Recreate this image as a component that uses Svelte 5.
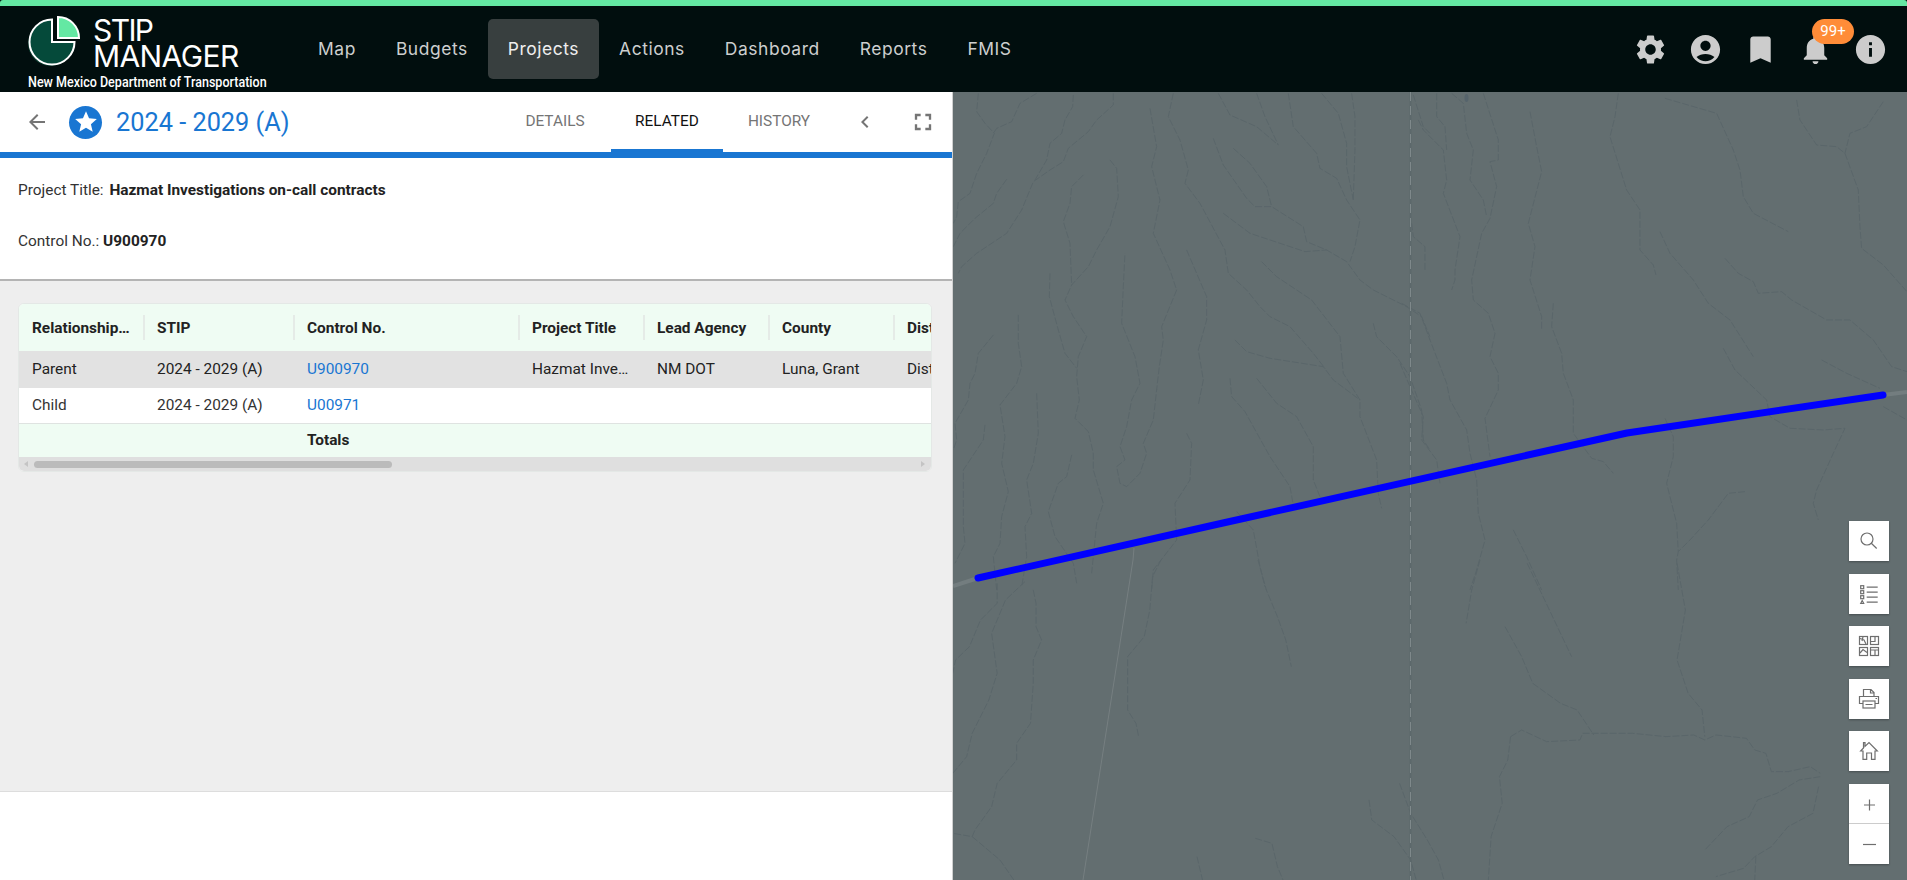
<script>
	const navItems = ['Map', 'Budgets', 'Projects', 'Actions', 'Dashboard', 'Reports', 'FMIS'];
	const tabs = ['Details', 'Related', 'History'];

	const columns = ['Relationship Type', 'STIP', 'Control No.', 'Project Title', 'Lead Agency', 'County', 'District'];
	const rows = [
		{ kind: 'selected', cells: ['Parent', '2024 - 2029 (A)', 'U900970', 'Hazmat Investigations on-call contracts', 'NM DOT', 'Luna, Grant', 'District 6'] },
		{ kind: '', cells: ['Child', '2024 - 2029 (A)', 'U00971', '', '', '', ''] }
	];

	// drainage lines, traced per area of the map (local units, scaled by the group transform)
	const streamsA = [
		'85,10 80,65 105,100 133,130 110,190 80,250 60,310 25,335 20,380 10,400',
		'370,15 368,50 345,90 335,130 300,160 290,210 255,270',
		'260,10 210,40 185,95 140,115 130,130',
		'490,10 490,45 440,90 415,125 355,175 340,215 300,240 250,275 215,360 170,430 140,450 80,490 35,530 25,550',
		'170,268 140,310 130,340 75,385 30,430 10,470',
		'400,255 365,290 360,340 340,395 360,460 365,585',
		'480,210 500,235 505,320 480,410 440,480 415,530 365,585 345,630 370,680 410,740 385,800 380,860 388,930 375,985 415,1025 430,1090 430,1140 460,1240 440,1300 425,1450',
		'300,550 298,620 325,720 345,790 380,835',
		'600,55 620,170 605,230 630,330 610,430 660,540 680,600 635,710 640,750 628,830 620,900 610,990 580,1060 590,1090 570,1150 530,1190 510,1180 500,1130 525,1110 510,1070 530,1010 545,930 570,880 555,800 515,700 520,590 525,490',
		'670,10 655,80 690,150 715,240 705,280 750,340 825,480 835,550 890,600 930,650 960,680 1020,710 1090,790 1125,835',
		'710,480 770,620 770,690 745,780 760,870 745,945',
		'790,145 820,225 890,325 915,350 965,350 1060,410 1070,455 1130,480 1190,515 1230,570 1270,600 1370,650 1415,680 1440,740',
		'850,175 900,220 950,290 965,350',
		'805,10 840,75 920,110 985,165',
		'920,10 945,80 985,165',
		'1015,10 1030,110 1100,190 1110,235 1160,265 1190,330 1230,390 1215,470 1200,515',
		'1115,10 1165,70 1190,160 1190,230 1210,330',
		'1205,10 1215,80 1215,180 1210,330',
		'820,370 900,430 1065,485 1130,480',
		'935,515 980,560 1085,630 1170,740 1180,850 1230,930 1230,980 1280,1110 1285,1210 1295,1255',
		'855,750 890,785 960,805 1120,830 1150,870 1210,915 1230,930',
		'920,865 980,940 1040,980 1090,1070 1090,1170 1110,1220',
		'840,865 845,920 885,965 960,1100 1020,1190 1030,1245',
		'205,675 205,760 215,830 200,880 150,945 165,1040 155,1120 175,1205 155,1280 150,1360 130,1400 140,1500',
		'130,735 85,790 75,850 60,880 55,930 15,1000 20,1050 10,1080',
		'260,910 265,1030 250,1120 230,1170 245,1270 225,1310 230,1400 215,1490',
		'105,1005 100,1050 40,1140 40,1310 45,1360 15,1420',
		'365,1095 350,1160 325,1180 295,1265 315,1340 370,1420 380,1480',
		'710,1030 725,1060 720,1170 675,1240 680,1350 610,1440 605,1500',
		'860,1265 910,1320 930,1430 945,1490',
		'1270,700 1280,740 1340,800 1380,860 1415,960 1420,1050 1440,1080',
		'1390,15 1420,110 1440,130',
		'1385,400 1390,440 1425,470 1425,545'
	];
	const streamsB = [
		'55,90 70,120 130,180 140,270 130,310 180,440 165,540 165,570 155,600',
		'110,10 110,80 135,110 140,180',
		'155,10 190,40 200,130 220,180 210,270 250,330 260,380',
		'250,10 295,150 295,210 270,215 290,290 270,385 245,430 215,570 220,630 265,670 285,730 270,800 295,850 295,900 255,985 270,1100',
		'390,65 410,170 425,245 385,400 405,470 390,570 425,680 425,720',
		'655,10 645,80 630,140 680,300 720,360 720,480 760,525 768,555',
		'795,25 950,70 1000,180 1020,240 1030,320 1060,370 1165,425',
		'1190,30 1200,90 1250,165 1310,170 1335,190 1375,300 1380,410 1385,475 1450,525 1521,605',
		'1450,35 1400,110 1350,130 1335,190',
		'5,640 60,670 90,750 140,880 150,930 200,1020 210,1090 230,1170 235,1270 255,1350 230,1440 210,1500',
		'460,640 455,710 485,790 490,850 520,930 520,1030 575,1105 610,1115 640,1150',
		'780,425 810,490 880,570 925,640 990,690 1060,800',
		'970,775 1005,840 1100,930 1110,980 1170,1015 1270,1020 1335,1015 1300,1090 1250,1200 1240,1240 1255,1290',
		'975,505 1015,550 1060,575 1075,610 1145,605 1175,630 1280,690 1350,690 1420,750 1475,830 1521,845',
		'1265,810 1340,850 1440,895',
		'795,985 820,1040 820,1100 800,1180 830,1300 835,1385 830,1410 835,1500',
		'1035,1205 985,1210 925,1290 870,1350 835,1385',
		'340,1320 380,1400 425,1500',
		'1450,950 1521,990',
		'0,820 30,890 70,980 65,1050 110,1110 120,1180'
	];
	const streamsC = [
		'85,70 85,130 55,180 35,260 10,300 5,340',
		'135,65 100,120 75,220 85,340 70,420 40,520 30,590 5,640',
		'150,90 155,130 155,200 165,240 150,300 150,370 145,490 120,550 120,600 85,670 75,740 45,810 40,830 5,820',
		'40,830 90,900 115,960',
		'380,0 365,50 360,150 350,230 320,290 320,370 320,450 335,490 340,530',
		'555,0 570,90 590,170 605,240 615,320',
		'955,0 940,90 930,190',
		'1040,10 1080,150 1120,290',
		'1000,200 1030,290 1050,370 1100,430 1130,450 1160,525',
		'1310,10 1325,150 1310,300 1330,400 1355,450 1360,530',
		'1010,530 1030,510 1075,545 1135,540 1140,520 1230,520 1290,530 1340,525 1360,540 1380,525 1435,535 1450,570 1470,580 1480,635 1510,635 1550,620 1568,640',
		'1010,530 1005,600 990,650 995,730 975,830 970,960',
		'1568,650 1530,660 1490,700 1455,720 1440,770 1400,800 1360,870',
		'1565,680 1555,760 1510,800 1480,860 1450,890 1430,925 1380,950',
		'810,670 830,760 860,840 880,900 890,960',
		'755,720 760,780 800,830 830,900 840,960',
		'550,835 580,850 590,920 600,960',
		'445,890 455,960',
		'1452,890 1450,960'
	];
</script>

<div class="app">
	<div class="band"></div>

	<header class="topbar">
		<div class="brand">
			<div class="brand-top">
				<svg class="logo" width="60" height="56" viewBox="24 13 60 56">
					<path d="M50.500 21 A22.500 22.500 0 1 0 73 43.500 L50.500 43.500 Z" fill="#0b3a2e" />
					<path d="M52 19.500 A22.500 22.500 0 1 0 74.500 42 L52 42 Z" fill="#054a3a" stroke="#fff" stroke-width="2" />
					<path d="M58 17 A21 21 0 0 1 79 38 L58 38 Z" fill="#64e8a3" stroke="#fff" stroke-width="2" />
				</svg>
				<div class="wordmark"><span class="stip">STIP</span><br />MANAGER</div>
			</div>
			<div class="dept">New Mexico Department of Transportation</div>
		</div>

		<nav class="nav">
			{#each navItems as item}
				<a href="#top" class="nav-link" class:active={item === 'Projects'}>{item}</a>
			{/each}
		</nav>

		<div class="top-icons">
			<svg viewBox="0 0 24 24"><path d="M19.14 12.94c.04-.3.06-.61.06-.94 0-.32-.02-.64-.07-.94l2.03-1.58c.18-.14.23-.41.12-.61l-1.92-3.32c-.12-.22-.37-.29-.59-.22l-2.39.96c-.5-.38-1.03-.7-1.62-.94l-.36-2.54c-.04-.24-.24-.41-.48-.41h-3.84c-.24 0-.43.17-.47.41l-.36 2.54c-.59.24-1.13.57-1.62.94l-2.39-.96c-.22-.08-.47 0-.59.22L2.74 8.87c-.12.21-.08.47.12.61l2.03 1.58c-.05.3-.09.63-.09.94s.02.64.07.94l-2.03 1.58c-.18.14-.23.41-.12.61l1.92 3.32c.12.22.37.29.59.22l2.39-.96c.5.38 1.03.7 1.62.94l.36 2.54c.05.24.24.41.48.41h3.84c.24 0 .44-.17.47-.41l.36-2.54c.59-.24 1.13-.56 1.62-.94l2.39.96c.22.08.47 0 .59-.22l1.92-3.32c.12-.22.07-.47-.12-.61l-2.01-1.58zM12 15.600c-1.98 0-3.6-1.62-3.6-3.6s1.62-3.6 3.6-3.6 3.6 1.62 3.6 3.6-1.62 3.6-3.6 3.6z" /></svg>
			<svg viewBox="0 0 24 24"><path d="M12 2C6.48 2 2 6.48 2 12s4.48 10 10 10 10-4.48 10-10S17.52 2 12 2zm0 4c1.93 0 3.5 1.57 3.5 3.5S13.93 13 12 13s-3.5-1.57-3.5-3.5S10.07 6 12 6zm0 14c-2.03 0-4.43-.82-6.14-2.88C7.55 15.8 9.68 15 12 15s4.45.8 6.14 2.12C16.43 19.18 14.03 20 12 20z" /></svg>
			<svg viewBox="0 0 24 24"><path d="M17 3H7c-1.100 0-1.990.9-1.990 2L5 21l7-3 7 3V5c0-1.100-.9-2-2-2z" /></svg>
			<div class="bell">
				<svg viewBox="0 0 24 24"><path d="M12 22c1.100 0 2-.9 2-2h-4c0 1.100.9 2 2 2zm6-6v-5c0-3.070-1.630-5.640-4.500-6.320V4c0-.83-.67-1.500-1.500-1.500s-1.500.67-1.500 1.500v.68C7.640 5.360 6 7.920 6 11v5l-2 2v1h16v-1l-2-2z" /></svg>
				<span class="badge">99+</span>
			</div>
			<svg viewBox="0 0 24 24"><path d="M12 2C6.480 2 2 6.480 2 12s4.480 10 10 10 10-4.480 10-10S17.520 2 12 2zm1 15h-2v-6h2v6zm0-8h-2V7h2v2z" /></svg>
		</div>
	</header>

	<main class="content">
		<section class="panel">
			<div class="toolbar">
				<svg class="back" viewBox="0 0 24 24"><path d="M20 11H7.830l5.590-5.590L12 4l-8 8 8 8 1.410-1.410L7.830 13H20v-2z" /></svg>
				<span class="star-badge">
					<svg viewBox="0 0 24 24"><path d="M12 17.270 18.180 21l-1.640-7.030L22 9.240l-7.190-.61L12 2 9.190 8.630 2 9.240l5.460 4.730L5.820 21z" /></svg>
				</span>
				<h1>2024 - 2029 (A)</h1>

				<div class="tabs">
					{#each tabs as tab}
						<div class="tab" class:current={tab === 'Related'}>{tab}</div>
					{/each}
				</div>
				<svg class="tool chevron" viewBox="0 0 24 24"><path d="M15.410 7.410 14 6l-6 6 6 6 1.410-1.410L10.830 12z" /></svg>
				<svg class="tool expand" viewBox="0 0 24 24"><path d="M7 14H5v5h5v-2H7v-3zm-2-4h2V7h3V5H5v5zm12 7h-3v2h5v-5h-2v3zM14 5v2h3v3h2V5h-5z" /></svg>
			</div>

			<div class="info">
				<p>Project Title: <b class="title">Hazmat Investigations on-call contracts</b></p>
				<p>Control No.: <b>U900970</b></p>
			</div>

			<div class="grey">
				<div class="grid">
					<div class="grid-clip">
						<table>
							<colgroup>
								<col style="width:125px" />
								<col style="width:150px" />
								<col style="width:225px" />
								<col style="width:125px" />
								<col style="width:125px" />
								<col style="width:125px" />
								<col style="width:125px" />
							</colgroup>
							<thead>
								<tr>
									{#each columns as col}
										<th><span>{col}</span></th>
									{/each}
								</tr>
							</thead>
							<tbody>
								{#each rows as row}
									<tr class={row.kind}>
										{#each row.cells as cell, i}
											<td class:link={i === 2}>{cell}</td>
										{/each}
									</tr>
								{/each}
								<tr class="totals">
									<td></td>
									<td></td>
									<td>Totals</td>
									<td></td>
									<td></td>
									<td></td>
									<td></td>
								</tr>
							</tbody>
						</table>
					</div>
					<div class="hscroll">
						<span class="arrow left"></span>
						<span class="thumb"></span>
						<span class="arrow right"></span>
					</div>
				</div>
			</div>

			<div class="foot"></div>
		</section>

		<section class="map">
			<svg class="map-layer" viewBox="953 92 954 788" preserveAspectRatio="none">
				<g class="streams">
					<g transform="translate(950 90) scale(.3333)">
						{#each streamsA as pts}<polyline points={pts} />{/each}
					</g>
					<g transform="translate(1400 90) scale(.3333)">
						{#each streamsB as pts}<polyline points={pts} />{/each}
					</g>
					<g transform="translate(950 560) scale(.555 .3333)">
						{#each streamsC as pts}<polyline points={pts} />{/each}
					</g>
				</g>
				<ellipse cx="1466.500" cy="98" rx="2" ry="4" fill="#56646c" />
				<polyline class="thin-road" points="1134,548 1133,560 1083,880" />
				<line class="dash-under" x1="1410.500" y1="92" x2="1410.500" y2="880" />
				<line class="dash-over" x1="1410.500" y1="92" x2="1410.500" y2="880" />
				<polyline class="road" points="953,586 978,578" />
				<polyline class="road" points="1883,395 1907,392" />
				<polyline class="route" points="978,578 1223,523 1627,433 1883,395" />
			</svg>

			<div class="controls">
				<button aria-label="Search">
					<svg viewBox="0 0 40 40"><circle cx="18" cy="18" r="6" /><path d="M22.300 22.300 27.700 27.500" /></svg>
				</button>
				<button aria-label="Legend">
					<svg viewBox="0 0 40 40">
						<rect x="11.700" y="11.700" width="3" height="3" /><rect x="11.700" y="16.700" width="3" height="3" /><rect x="11.700" y="21.700" width="3" height="3" /><path d="M11.700 29.500 13.200 26.500 14.700 29.500Z" />
						<path d="M17.700 13.200H28.700M17.700 18.200H28.700M17.700 23.200H28.700M17.700 28.200H28.700" />
					</svg>
				</button>
				<button aria-label="Basemaps">
					<svg viewBox="0 0 40 40">
						<rect x="10.500" y="10.500" width="8" height="8" /><rect x="21.500" y="10.500" width="8" height="8" /><rect x="10.500" y="21.500" width="8" height="8" /><rect x="21.500" y="21.500" width="8" height="8" />
						<path d="M11 12.500 15 14 17 18M14 11 13 15M22 15.500H26V11M11 27 14 23.500 18 26.500M22 24H29M26 24V29" />
					</svg>
				</button>
				<button aria-label="Print">
					<svg viewBox="0 0 40 40">
						<path d="M14.500 17V10.500H22L25 13.500V17M21.500 10.500V14H25" />
						<path d="M14 24.500H10.500V17.500H29.500V24.500H26" />
						<rect x="14" y="22" width="12" height="7" />
						<path d="M16.500 25.500H23.500M26.500 19.500H28" />
					</svg>
				</button>
				<button aria-label="Home">
					<svg viewBox="0 0 40 40">
						<path d="M11.700 20 14.500 17V11.700H16V15.400L20 11.500 28.300 20H26V28.300H22.500V22H17.700V28.300H14V20Z" />
					</svg>
				</button>
				<div class="zoom">
					<button aria-label="Zoom in">
						<svg viewBox="0 0 40 40"><path d="M15 21H26M20.500 15.500V26.500" /></svg>
					</button>
					<button aria-label="Zoom out">
						<svg viewBox="0 0 40 40"><path d="M14 20.500H27" /></svg>
					</button>
				</div>
			</div>
		</section>
	</main>
</div>

<style>
	:global(body) {
		margin: 0;
		background: #010e0e;
		font-family: Roboto, 'Liberation Sans', sans-serif;
	}

	.app {
		display: flex;
		flex-direction: column;
		height: 880px;
		overflow: hidden;
	}

	.band {
		height: 6px;
		background: #64e8a3;
		border-radius: 3px 3px 0 0;
		flex: none;
	}

	/* top bar */
	.topbar {
		display: flex;
		align-items: stretch;
		height: 86px;
		flex: none;
		background: #010e0e;
	}

	.brand {
		width: 298px;
		flex: none;
		padding: 9px 0 0 28px;
		box-sizing: border-box;
		color: #fff;
	}

	.brand-top {
		display: flex;
		align-items: flex-start;
		height: 59px;
	}

	.logo {
		flex: none;
		margin: -2px 0 0 -4px;
		width: 60px;
		height: 56px;
	}

	.wordmark {
		margin-left: 9px;
		padding-top: 2px;
		font-family: Inter, sans-serif;
		font-size: 30px;
		line-height: 26px;
		letter-spacing: -0.6px;
	}

	.stip {
		letter-spacing: -1.600px;
	}

	.dept {
		font-size: 14px;
		font-weight: 500;
		line-height: 16px;
		white-space: nowrap;
		transform: scaleX(0.895);
		transform-origin: left center;
	}

	.nav {
		display: flex;
		align-items: center;
	}

	.nav-link {
		display: flex;
		align-items: center;
		height: 60px;
		margin-top: -1px;
		padding: 0 20px;
		font-family: Inter, sans-serif;
		font-size: 17.450px;
		letter-spacing: 0.550px;
		color: #cdcfcf;
		text-decoration: none;
		border-radius: 5px;
	}

	.nav-link.active {
		background: #383f3f;
		color: #eee;
	}

	.top-icons {
		display: flex;
		align-items: center;
		gap: 20px;
		margin-left: auto;
		padding-right: 19px;
	}

	.top-icons svg {
		display: block;
		width: 35px;
		height: 35px;
		fill: #ccc;
	}

	.bell {
		position: relative;
	}

	.badge {
		position: absolute;
		left: 14px;
		top: -13px;
		width: 42px;
		height: 25px;
		border-radius: 13px;
		background: #ff8c38;
		color: #fff;
		font-size: 15px;
		line-height: 25px;
		text-align: center;
	}

	/* main split */
	.content {
		display: flex;
		flex: 1;
		min-height: 0;
	}

	.panel {
		display: flex;
		flex-direction: column;
		width: 953px;
		flex: none;
		box-sizing: border-box;
		background: #fff;
		border-right: 1px solid #d0d0d0;
	}

	.toolbar {
		display: flex;
		align-items: center;
		height: 60px;
		flex: none;
		padding-left: 25px;
		border-bottom: 6px solid #1976d2;
		position: relative;
	}

	.back {
		width: 24px;
		height: 24px;
		fill: #757575;
		margin-right: 20px;
	}

	.star-badge {
		display: flex;
		align-items: center;
		justify-content: center;
		width: 33px;
		height: 33px;
		border-radius: 50%;
		background: #1976d2;
		margin-right: 14px;
	}

	.star-badge svg {
		width: 26px;
		height: 26px;
		fill: #fff;
	}

	h1 {
		margin: 0;
		font-size: 25.300px;
		font-weight: 400;
		color: #1976d2;
	}

	.tabs {
		display: flex;
		position: absolute;
		left: 499px;
		top: 0;
		height: 66px;
	}

	.tab {
		width: 112px;
		height: 66px;
		padding-top: 19px;
		box-sizing: border-box;
		text-align: center;
		font-size: 15.400px;
		line-height: 20px;
		text-transform: uppercase;
		color: #757575;
		position: relative;
	}

	.tab.current {
		color: #111;
	}

	.tab.current::after {
		content: '';
		position: absolute;
		left: 0;
		right: 0;
		bottom: 0;
		height: 9px;
		background: #1976d2;
	}

	.tool {
		position: absolute;
		fill: #757575;
	}

	.chevron {
		left: 853px;
		top: 18px;
		width: 24px;
		height: 24px;
	}

	.expand {
		left: 909px;
		top: 16px;
		width: 28px;
		height: 28px;
	}

	.info {
		flex: none;
		height: 123px;
		padding: 22px 0 0 18px;
		box-sizing: border-box;
		border-bottom: 2px solid #b4b4b4;
		font-size: 15.400px;
		line-height: 21px;
		color: #333;
	}

	.info p {
		margin: 0 0 30px;
	}

	.info b {
		font-weight: 700;
		color: #222;
	}

	.info b.title {
		margin-left: 2px;
	}

	.grey {
		flex: 1;
		background: #eee;
		padding: 22px 20px 0 18px;
	}

	.grid {
		border: 1px solid #e4e8e6;
		border-radius: 6px;
		overflow: hidden;
		background: #fff;
	}

	.grid-clip {
		overflow: hidden;
	}

	table {
		width: 1000px;
		table-layout: fixed;
		border-collapse: collapse;
		font-size: 15.400px;
		color: #222;
	}

	th {
		height: 47px;
		padding: 0;
		background: #effcf3;
		font-weight: 700;
		text-align: left;
		position: relative;
	}

	th span {
		display: block;
		padding: 0 13px;
		overflow: hidden;
		white-space: nowrap;
		text-overflow: ellipsis;
	}

	th:not(:first-child)::before {
		content: '';
		position: absolute;
		left: -1px;
		top: 11px;
		width: 2px;
		height: 25px;
		background: #e5ebe7;
	}

	td {
		height: 35px;
		padding: 0 13px;
		box-sizing: border-box;
		overflow: hidden;
		white-space: nowrap;
		text-overflow: ellipsis;
		color: #333;
	}

	tr.selected td {
		height: 37px;
		padding-bottom: 2px;
		background: #e2e2e2;
		color: #222;
	}

	tr td.link,
	tr.selected td.link {
		color: #1976d2;
	}

	tr.totals td {
		height: 34px;
		padding-bottom: 1px;
		border-top: 1px solid #dfe3e1;
		background: #effcf3;
		font-weight: 700;
		color: #222;
	}

	.hscroll {
		display: flex;
		align-items: center;
		height: 14px;
		background: #dfdfdf;
		position: relative;
	}

	.thumb {
		position: absolute;
		left: 15px;
		width: 358px;
		height: 7px;
		border-radius: 4px;
		background: #bbb;
	}

	.arrow {
		position: absolute;
		width: 0;
		height: 0;
		border-top: 3px solid transparent;
		border-bottom: 3px solid transparent;
	}

	.arrow.left {
		left: 5px;
		border-right: 4px solid #c4c4c4;
	}

	.arrow.right {
		right: 6px;
		border-left: 4px solid #c4c4c4;
	}

	.foot {
		flex: none;
		height: 89px;
		background: #fff;
		border-top: 1px solid #ddd;
		box-sizing: border-box;
	}

	/* map */
	.map {
		flex: 1;
		position: relative;
		background: #636e70;
		overflow: hidden;
	}

	.map-layer {
		position: absolute;
		inset: 0;
		width: 100%;
		height: 100%;
	}

	.streams polyline {
		fill: none;
		stroke: #5a666a;
		stroke-width: 1;
		stroke-dasharray: 7 2;
		stroke-linejoin: round;
		vector-effect: non-scaling-stroke;
	}

	.thin-road {
		fill: none;
		stroke: #767f81;
		stroke-width: 1;
	}

	.dash-under {
		stroke: #5c686b;
		stroke-width: 2;
	}

	.dash-over {
		stroke: #7f898b;
		stroke-width: 1;
		stroke-dasharray: 9 5;
	}

	.road {
		fill: none;
		stroke: #737d7f;
		stroke-width: 4;
	}

	.route {
		fill: none;
		stroke: #0000ff;
		stroke-width: 7;
		stroke-linecap: round;
		stroke-linejoin: round;
	}

	.controls {
		position: absolute;
		right: 18px;
		bottom: 16px;
		display: flex;
		flex-direction: column;
		gap: 12.600px;
	}

	button {
		display: block;
		width: 40px;
		height: 40px;
		padding: 0;
		border: 0;
		background: #fff;
		box-shadow: 0 1px 2px rgba(0, 0, 0, 0.3);
	}

	button svg {
		display: block;
		width: 40px;
		height: 40px;
		fill: none;
		stroke: #6e6e6e;
		stroke-width: 1.200;
	}

	.zoom {
		box-shadow: 0 1px 2px rgba(0, 0, 0, 0.3);
	}

	.zoom button {
		box-shadow: none;
		box-sizing: border-box;
	}

	.zoom button:first-child {
		border-bottom: 1px solid #ccc;
	}
</style>
